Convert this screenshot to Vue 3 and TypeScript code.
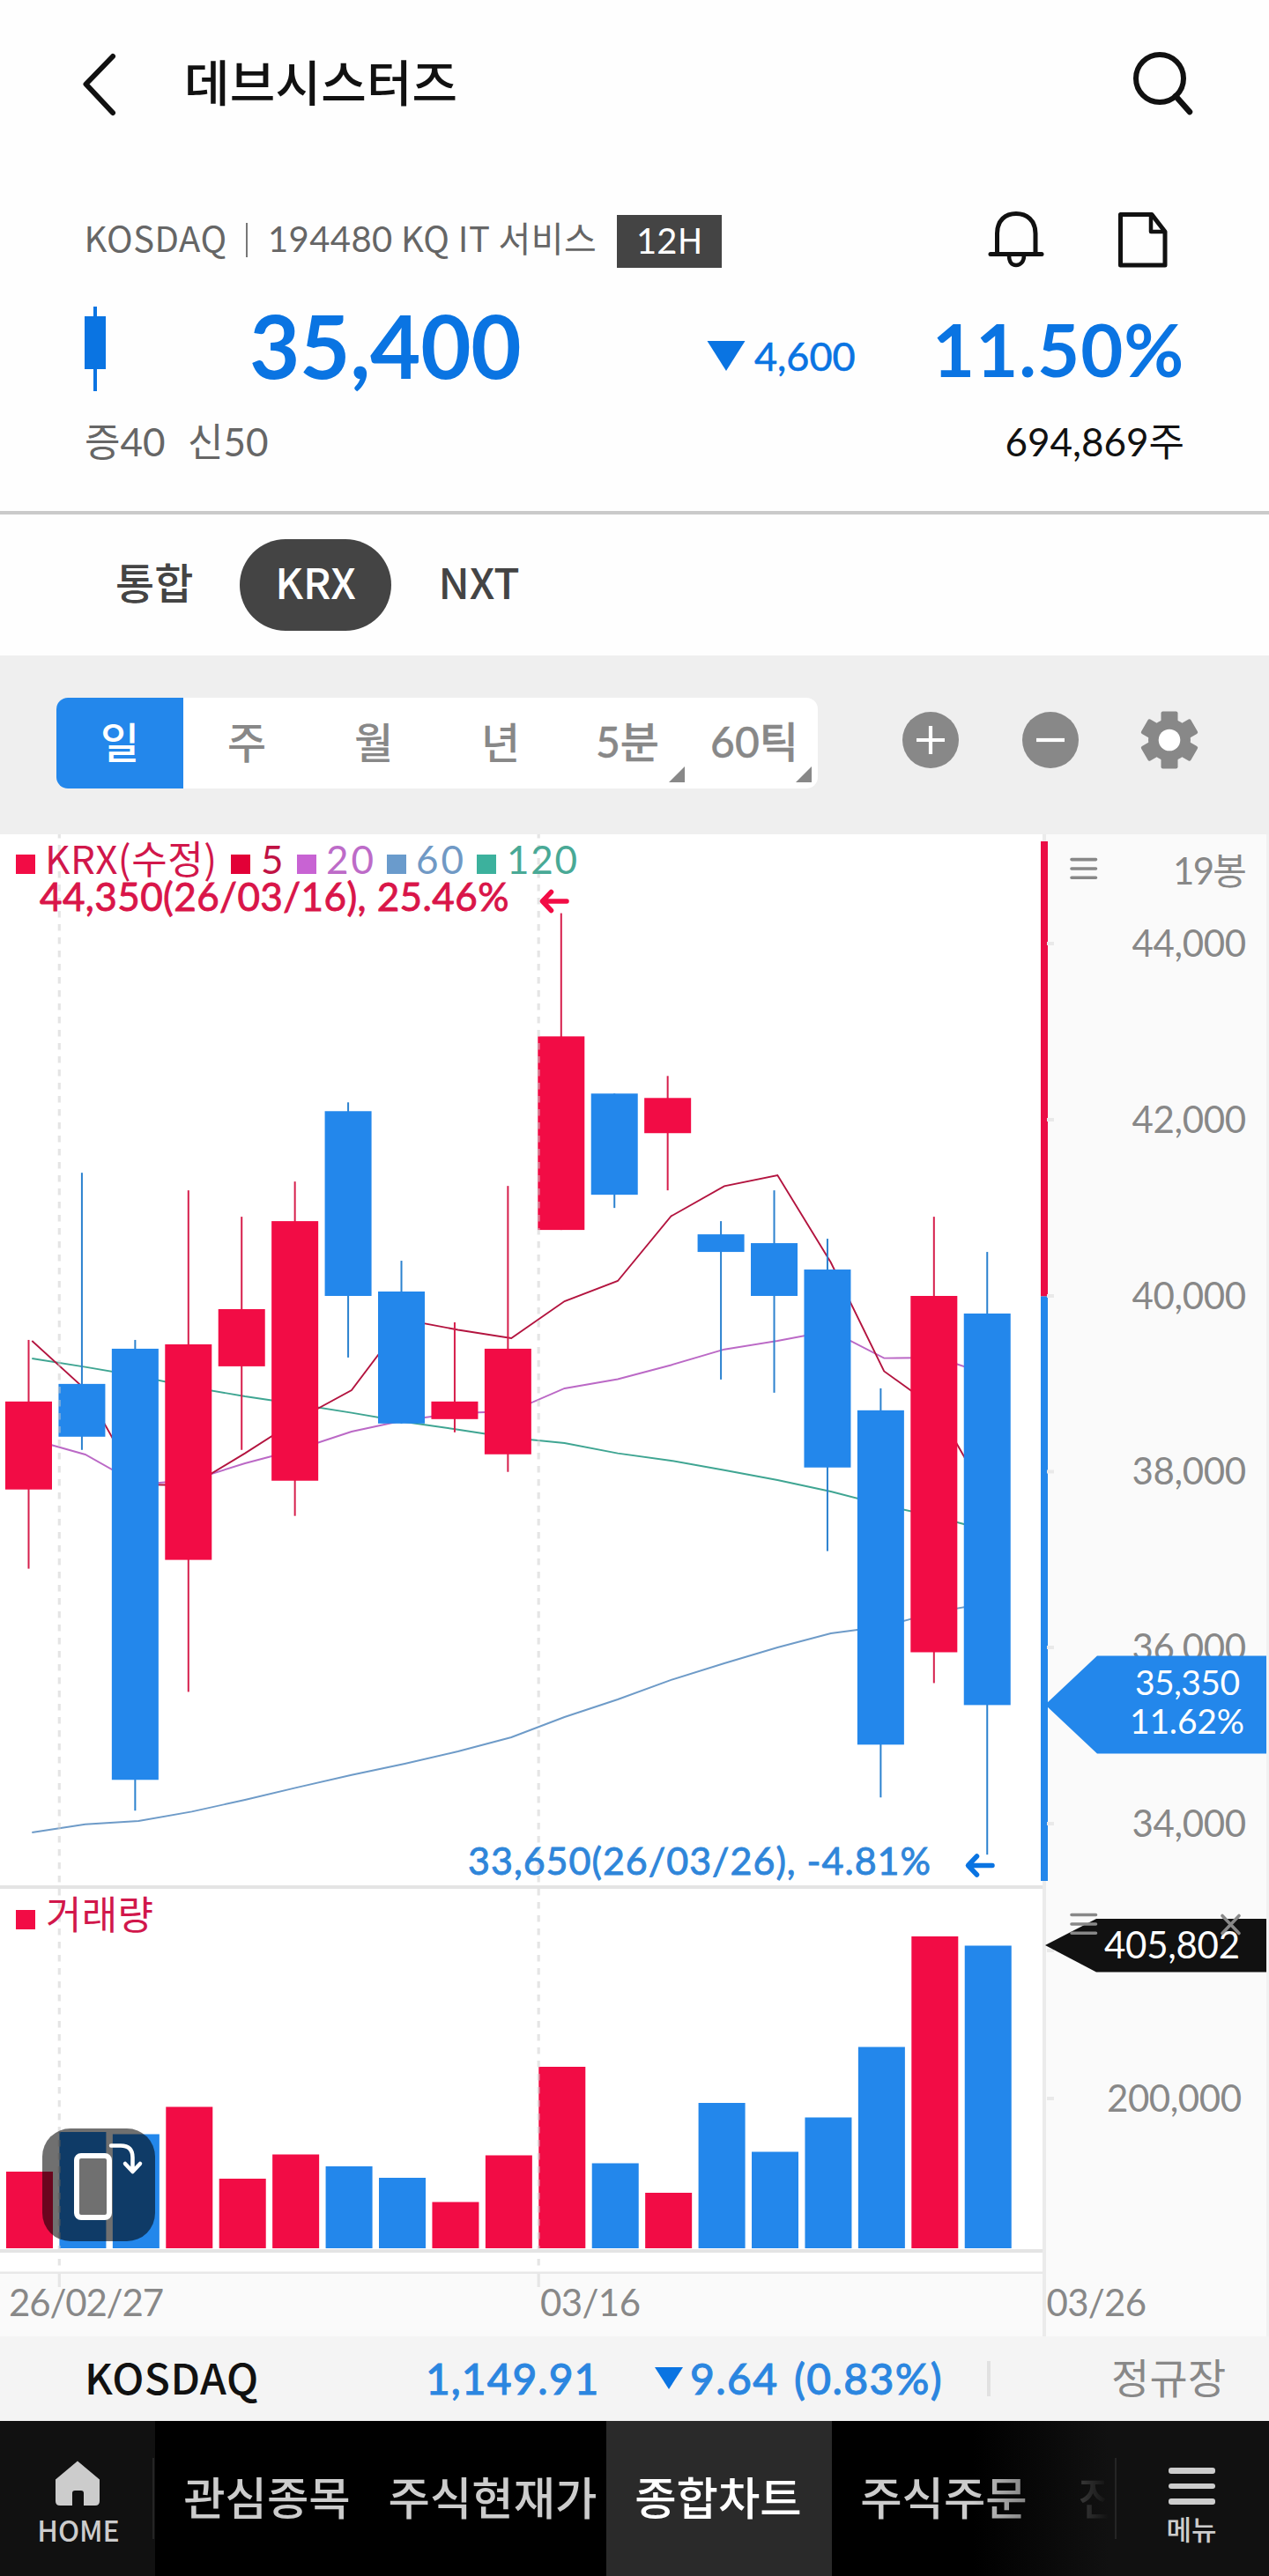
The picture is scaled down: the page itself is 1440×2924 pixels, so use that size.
<script setup lang="ts">
interface Candle {
  open: number
  close: number
  high: number
  low: number
  volumeTop: number
}

interface ChartText {
  x: number
  y: number
  w: number
  size: number
  text: string
  fill: string
  medium?: boolean
  kr?: boolean
}

const RED = '#f20c45'
const BLUE = '#2387eb'
const GRAY = '#888888'

const periods = ['일', '주', '월', '년']

// open, close, high, low in won; top edge of the volume bar in chart units
const rows: number[][] = [
  [37800, 38800, 39500, 36900, 2465],
  [39000, 38400, 41400, 38250, 2420],
  [39400, 34500, 39500, 34150, 2422.5],
  [37000, 39450, 41200, 35500, 2391.5],
  [39200, 39850, 40900, 38250, 2473],
  [37900, 40850, 41300, 37500, 2445.5],
  [42100, 40000, 42200, 39300, 2459],
  [40050, 38550, 40400, 38550, 2472],
  [38600, 38800, 39700, 38450, 2499.5],
  [38200, 39400, 41250, 38000, 2446.5],
  [40750, 42950, 44350, 40750, 2346],
  [42300, 41150, 42300, 41000, 2455.5],
  [41850, 42250, 42500, 41200, 2489],
  [40700, 40500, 40850, 39050, 2387],
  [40600, 40000, 41200, 38900, 2442.5],
  [40300, 38050, 40650, 37100, 2403.5],
  [38700, 34900, 38950, 34300, 2323.5],
  [35950, 40000, 40900, 35600, 2198],
  [39800, 35350, 40500, 33650, 2208.5],
]
const candles: Candle[] = rows.map(([open, close, high, low, volumeTop]) => ({ open, close, high, low, volumeTop }))

const STEP = 60.43
const cx = (i: number): number => 32.5 + i * STEP
const py = (price: number): number => 1471 + (40000 - price) * 0.09987
const color = (c: Candle): string => (c.close >= c.open ? RED : BLUE)
const wickColor = (c: Candle): string => (c.close >= c.open ? '#d61f4c' : '#2c82cf')

const averages: { color: string; ys: number[] }[] = [
  { color: '#3fa592', ys: [1542, 1551.6, 1562, 1574.6, 1585, 1594, 1603.6, 1614, 1622.7, 1632, 1638, 1649.6, 1658, 1668.7, 1680, 1693, 1708.6, 1722, 1738] },
  { color: '#6e9bc8', ys: [2080, 2070.7, 2067, 2056.4, 2043, 2028.6, 2014.8, 2002, 1988, 1972, 1949, 1929, 1906.8, 1888, 1870, 1854, 1846, 1829.6, 1819] },
  { color: '#bb69c6', ys: [1634, 1651, 1685, 1680, 1661, 1645, 1625, 1612, 1604, 1602, 1576, 1565.5, 1549.5, 1531.7, 1522, 1510.5, 1541.6, 1541, 1561] },
  { color: '#b3143f', ys: [1522, 1577, 1685, 1686, 1649.6, 1611, 1578, 1498, 1509.5, 1519, 1477, 1454, 1380.5, 1346.4, 1334, 1433, 1556.4, 1600, 1706] },
]
const points = (ys: number[]): string => ys.map((y, i) => `${(36.3 + i * STEP).toFixed(1)},${y}`).join(' ')

const swatches = [
  { x: 18, y: 970, fill: RED },
  { x: 262, y: 970, fill: '#e20037' },
  { x: 337, y: 970, fill: '#c863d3' },
  { x: 439, y: 970, fill: '#6a9bcc' },
  { x: 541, y: 970, fill: '#3cb19d' },
  { x: 18, y: 2168, fill: RED },
]

const ticks = [1071, 1271, 1471, 1670.5, 1870, 2070, 2214, 2382]

const axisTexts: ChartText[] = [
  { x: 1331, y: 1004, w: 84, size: 42, text: '19봉', fill: GRAY },
  ...['44,000', '42,000', '40,000', '38,000', '36,000', '34,000'].map((text, i) => ({
    x: 1284.5, y: Math.round(1086 + i * 199.8), w: 129.5, size: 42, text, fill: GRAY,
  })),
  { x: 1256, y: 2397, w: 153, size: 42, text: '200,000', fill: GRAY },
  { x: 10, y: 2629, w: 176, size: 42, text: '26/02/27', fill: GRAY },
  { x: 613, y: 2629, w: 114, size: 42, text: '03/16', fill: GRAY },
  { x: 1187.5, y: 2629, w: 113.5, size: 42, text: '03/26', fill: GRAY },
]

const legendTexts: ChartText[] = [
  { x: 51, y: 992, w: 195, size: 44, text: 'KRX(수정)', fill: '#d1174b', kr: true },
  { x: 296, y: 992, w: 26, size: 44, text: '5', fill: '#c01244' },
  { x: 370, y: 992, w: 54, size: 44, text: '20', fill: '#bd6bc8' },
  { x: 472, y: 992, w: 54, size: 44, text: '60', fill: '#7099c5' },
  { x: 575, y: 992, w: 80, size: 44, text: '120', fill: '#49a996' },
  { x: 52, y: 2190, w: 122, size: 44, text: '거래량', fill: '#d1174b', kr: true },
  { x: 45, y: 1034, w: 532.5, size: 44, text: '44,350(26/03/16), 25.46%', fill: '#d91549', medium: true },
  { x: 531, y: 2128, w: 525, size: 43, text: '33,650(26/03/26), -4.81%', fill: '#2f86da', medium: true },
]

const tagTexts: ChartText[] = [
  { x: 1288, y: 1924, w: 119, size: 39, text: '35,350', fill: '#ffffff' },
  { x: 1282, y: 1968, w: 130, size: 39, text: '11.62%', fill: '#ffffff' },
  { x: 1253, y: 2223, w: 154, size: 42, text: '405,802', fill: '#ffffff' },
]

const tabs = [
  { label: '관심종목', active: false },
  { label: '주식현재가', active: false },
  { label: '종합차트', active: true },
  { label: '주식주문', active: false },
]
</script>

<template>
  <div class="app">
    <header class="topbar">
      <svg class="back" width="48" height="80" viewBox="0 0 48 80">
        <path d="M40 9 L9.500 40.500 L40 73" fill="none" stroke="#111" stroke-width="6" stroke-linecap="round" stroke-linejoin="round" />
      </svg>
      <h1 class="title">데브시스터즈</h1>
      <svg class="search" width="80" height="80" viewBox="0 0 80 80">
        <circle cx="38" cy="34" r="27" fill="none" stroke="#111" stroke-width="6" />
        <path d="M56 54 L72 72" stroke="#111" stroke-width="6.500" stroke-linecap="round" />
      </svg>
    </header>

    <section class="quote">
      <div class="meta">
        <span class="market">KOSDAQ</span>
        <span class="bar"></span>
        <span class="code"><span class="num">194480</span> KQ IT 서비스</span>
        <span class="badge"><span class="num">12</span>H</span>
        <svg class="bell" width="64" height="68" viewBox="0 0 64 68">
          <path d="M10.500 49 V27 C10.500 12 20 4.500 32 4.500 C44 4.500 54 12 54 27 V49" fill="none" stroke="#111" stroke-width="5" />
          <path d="M3 50.500 H61" stroke="#111" stroke-width="5" stroke-linecap="round" />
          <path d="M24 52 C24 59 27 63 32 63 C37 63 41 59 41 52" fill="none" stroke="#111" stroke-width="4.500" />
        </svg>
        <svg class="doc" width="60" height="68" viewBox="0 0 60 68">
          <path d="M4.500 4.500 H40 L55 24 V62 H4.500 Z" fill="none" stroke="#111" stroke-width="5" stroke-linejoin="round" />
          <path d="M39 5 V24 H54" fill="none" stroke="#111" stroke-width="4.500" stroke-linejoin="round" />
        </svg>
      </div>
      <div class="prices">
        <svg class="mini" width="24" height="96" viewBox="0 0 24 96">
          <path d="M12 0 V96" stroke="#0a74e2" stroke-width="4" />
          <rect x="0" y="11" width="24" height="60" fill="#0a74e2" />
        </svg>
        <strong class="price">35,400</strong>
        <svg class="down" width="44" height="34" viewBox="0 0 44 34"><path d="M0.500 0 H43.500 L22 34 Z" fill="#0a74e2" /></svg>
        <span class="diff">4,600</span>
        <strong class="rate">11.50%</strong>
      </div>
      <div class="sub">
        <span class="margin">증40</span>
        <span class="credit">신50</span>
        <span class="shares">694,869주</span>
      </div>
    </section>

    <nav class="venues">
      <span class="venue v1">통합</span>
      <span class="venue pill">KRX</span>
      <span class="venue v3">NXT</span>
    </nav>

    <section class="tools">
      <div class="segments">
        <span v-for="(p, i) in periods" :key="p" class="segment" :class="{ on: i === 0 }">{{ p }}</span>
        <span class="segment more">5분</span>
        <span class="segment more">60틱</span>
      </div>
      <svg class="tool plus" width="64" height="66" viewBox="-32 -33 64 66">
        <circle r="32" fill="#888" />
        <path d="M-16 0 H16 M0 -16 V16" stroke="#fff" stroke-width="4.200" />
      </svg>
      <svg class="tool minus" width="64" height="66" viewBox="-32 -33 64 66">
        <circle r="32" fill="#888" />
        <path d="M-16 0 H16" stroke="#fff" stroke-width="4.200" />
      </svg>
      <svg class="tool gear" width="68" height="66" viewBox="-34 -33 68 66">
        <circle r="24" fill="#888" />
        <rect v-for="a in [0, 60, 120, 180, 240, 300]" :key="a" x="-9.500" y="-32.500" width="19" height="20" rx="2" fill="#888" :transform="`rotate(${a})`" />
        <circle r="12.300" fill="#fff" />
      </svg>
    </section>

    <section class="chart">
      <svg width="1440" height="1705" viewBox="0 947 1440 1705">
        <rect x="0" y="947" width="1440" height="1705" fill="#fff" />
        <rect x="1187" y="947" width="250" height="1705" fill="#fafafa" />
        <rect x="1437" y="947" width="3" height="1705" fill="#f1f1f1" />
        <rect x="0" y="2580" width="1187" height="72" fill="#fafafa" />

        <polyline v-for="m in averages" :key="m.color" :points="points(m.ys)" fill="none" :stroke="m.color" stroke-width="1.900" />

        <g v-for="(c, i) in candles" :key="i" :fill="color(c)">
          <rect :x="cx(i) - 1" :y="py(c.high)" width="2" :height="py(c.low) - py(c.high)" :fill="wickColor(c)" />
          <rect :x="cx(i) - 26.500" :y="py(Math.max(c.open, c.close))" width="53" :height="Math.abs(py(c.open) - py(c.close))" />
          <rect :x="cx(i) - 25.500" :y="c.volumeTop" width="53" :height="2552 - c.volumeTop" />
        </g>

        <g stroke="#cccccc" stroke-opacity="0.5" stroke-width="3.200" stroke-dasharray="7.500 7.500">
          <path d="M67.300 944 V2579" />
          <path d="M611.200 944 V2579" />
        </g>
        <path d="M67.300 2581 V2596 M611.200 2581 V2596" stroke="#e6e6e6" stroke-width="3.200" />
        <path d="M0 2142 H1183 M0 2555 H1183" stroke="#e4e4e4" stroke-width="4" />
        <path d="M0 2579.800 H1183" stroke="#e8e8e8" stroke-width="2.500" />
        <rect x="1183" y="947" width="4" height="1705" fill="#ebebeb" />
        <rect x="1181" y="955" width="8" height="516.500" fill="#eb0d45" />
        <rect x="1181" y="1471.500" width="8" height="663.500" :fill="BLUE" />
        <rect v-for="t in ticks" :key="t" x="1188" :y="t - 2" width="8" height="4" fill="#e9e9e9" />

        <rect v-for="(s, i) in swatches" :key="i" :x="s.x" :y="s.y" width="22" height="22" :fill="s.fill" />

        <text
          v-for="t in [...legendTexts, ...axisTexts]"
          :key="t.text"
          :class="t.kr ? 'kr' : 'nm'"
          :x="t.x" :y="t.y" :font-size="t.size" :fill="t.fill" :textLength="t.w"
          :stroke="t.medium ? t.fill : 'none'" stroke-width="0.900"
        >{{ t.text }}</text>

        <g fill="none" stroke-width="5.500" stroke-linecap="round" stroke-linejoin="round">
          <path d="M643 1023 H616 M625.500 1012.500 L615.500 1023 L625.500 1033.500" :stroke="RED" />
          <path d="M1126 2117.500 H1099 M1108.500 2107 L1098.500 2117.500 L1108.500 2128" stroke="#0a74e2" />
        </g>

        <path d="M1186 1935 L1245 1879.500 H1437 V1990.500 H1245 Z" :fill="BLUE" />
        <path d="M1186 2208 L1244 2178 H1437 V2238.500 H1244 Z" fill="#111" />
        <text
          v-for="t in tagTexts" :key="t.text" class="nm"
          :x="t.x" :y="t.y" :font-size="t.size" :fill="t.fill" :textLength="t.w"
        >{{ t.text }}</text>

        <g stroke="#888" stroke-width="3.600" stroke-linecap="round" fill="none">
          <path d="M1216 975.600 H1243.500 M1216 986 H1243.500 M1216 996.300 H1243.500" />
          <path d="M1216 2173.500 H1243.500 M1216 2184 H1243.500 M1216 2194.300 H1243.500" />
          <path d="M1387 2174.500 L1406 2194.500 M1406 2174.500 L1387 2194.500" />
        </g>
      </svg>
      <svg class="rotate" width="128" height="128" viewBox="0 0 128 128">
        <rect width="128" height="128" rx="32" fill="#000" fill-opacity="0.56" />
        <rect x="39" y="31" width="37" height="70" rx="5" fill="#707070" stroke="#fff" stroke-width="6" />
        <path d="M78 19.500 H89 C98 19.500 102.500 24 102.500 33 V48 M94 40 L102.500 49 L111 40" fill="none" stroke="#fff" stroke-width="4.500" stroke-linecap="round" stroke-linejoin="round" />
      </svg>
    </section>

    <section class="index">
      <span class="name">KOSDAQ</span>
      <span class="value">1,149.91</span>
      <svg class="tri" width="32" height="25" viewBox="0 0 32 25"><path d="M0 0 H32 L16 25 Z" fill="#0a74e2" /></svg>
      <span class="change">9.64 (0.83%)</span>
      <span class="split"></span>
      <span class="session">정규장</span>
    </section>

    <footer class="nav">
      <div class="home">
        <svg width="52" height="52" viewBox="0 0 52 52">
          <path d="M26 0.500 L51 21.500 V46 Q51 51 46 51 H33 V37 Q33 34 30 34 H23 Q20 34 20 37 V51 H6 Q1 51 1 46 V21.500 Z" fill="#ccc" />
        </svg>
        <span>HOME</span>
      </div>
      <div class="tabs">
        <span v-for="t in tabs" :key="t.label" class="tab" :class="{ active: t.active }">{{ t.label }}</span>
        <span class="tab cut">진</span>
      </div>
      <div class="menu">
        <i></i><i></i><i></i>
        <span>메뉴</span>
      </div>
    </footer>
  </div>
</template>

<style>
body {
  margin: 0;
  background: #fff;
}
</style>

<style scoped>
.app {
  display: flex;
  flex-direction: column;
  width: 1440px;
  height: 2924px;
  overflow: hidden;
  background: #fefefe;
  color: #111;
  font-family: 'Noto Sans CJK KR', 'Noto Sans', sans-serif;
  white-space: nowrap;
}
.app svg {
  display: block;
  flex: none;
}
.num,
.nm {
  font-family: Lato, 'Noto Sans CJK KR', sans-serif;
}
.kr {
  font-family: 'Noto Sans CJK KR', sans-serif;
}

.topbar {
  display: flex;
  align-items: flex-start;
  height: 244px;
}
.back {
  margin: 55px 0 0 88px;
}
.title {
  margin: 51px 0 0 73px;
  font-size: 56px;
  line-height: 80px;
  font-weight: 500;
  letter-spacing: 0.2px;
}
.search {
  margin: 55px 82px 0 auto;
}

.quote {
  height: 336px;
  border-bottom: 4px solid #cacaca;
}
.meta {
  display: flex;
  align-items: flex-start;
  height: 104px;
  font-size: 40px;
  line-height: 51px;
  color: #666;
}
.market {
  width: 183px;
  margin-left: 95.5px;
  letter-spacing: 0.5px;
}
.bar {
  width: 2.5px;
  height: 39px;
  margin-top: 9px;
  background: #777;
}
.code {
  width: 396px;
  margin-left: 23px;
  letter-spacing: 0.4px;
}
.badge {
  width: 97px;
  height: 60px;
  padding-left: 22px;
  line-height: 54px;
  background: #444;
  color: #fff;
}
.bell {
  margin: -6px 0 0 302px;
}
.doc {
  margin: -5px 0 0 82px;
}
.prices {
  display: flex;
  align-items: flex-start;
  height: 110px;
  color: #0a74e2;
  font-family: Lato, sans-serif;
}
.mini {
  margin-left: 96px;
}
.price {
  width: 519px;
  margin-left: 163px;
  font-size: 99px;
  line-height: 88px;
  font-weight: 700;
  letter-spacing: -0.3px;
}
.down {
  margin-top: 39px;
}
.diff {
  width: 202px;
  margin-left: 10px;
  font-size: 45px;
  line-height: 112px;
  -webkit-text-stroke: 0.6px currentColor;
}
.rate {
  font-size: 83px;
  line-height: 97px;
  font-weight: 700;
  letter-spacing: 1px;
}
.sub {
  display: flex;
  height: 122px;
  color: #666;
  font-size: 44px;
  line-height: 86px;
  font-family: Lato, 'Noto Sans CJK KR', sans-serif;
}
.margin {
  width: 117px;
  margin-left: 96px;
}
.shares {
  margin-left: auto;
  margin-right: 96px;
  color: #111;
}

.venues {
  display: flex;
  align-items: flex-start;
  height: 160px;
  padding-top: 28px;
  box-sizing: border-box;
  flex: none;
}
.venue {
  height: 104px;
  font-size: 48px;
  line-height: 95px;
  font-weight: 500;
  color: #444;
}
.v1 {
  width: 141px;
  margin-left: 131px;
}
.pill {
  width: 172px;
  border-radius: 52px;
  background: #444;
  color: #fff;
  text-align: center;
}
.v3 {
  margin-left: 53.5px;
}

.tools {
  display: flex;
  align-items: flex-start;
  height: 203px;
  box-sizing: border-box;
  padding: 48px 0 0 64px;
  background: #efefef;
  flex: none;
}
.segments {
  display: flex;
  width: 864px;
  height: 103px;
  border-radius: 13px;
  overflow: hidden;
  background: #fff;
}
.segment {
  position: relative;
  width: 144px;
  font-size: 48px;
  line-height: 96px;
  font-weight: 500;
  text-align: center;
  color: #888;
}
.segment.on {
  background: #2387eb;
  color: #fff;
}
.segment.more {
  font-family: Lato, 'Noto Sans CJK KR', sans-serif;
  line-height: 99px;
  -webkit-text-stroke: 0.4px currentColor;
}
.segment.more::after {
  content: '';
  position: absolute;
  right: 7px;
  bottom: 7px;
  border-left: 18px solid transparent;
  border-bottom: 18px solid #888;
}
.tool {
  margin-top: 15px;
}
.plus {
  margin-left: 96px;
}
.minus {
  margin-left: 72px;
}
.gear {
  margin-left: 69px;
}

.chart {
  position: relative;
  height: 1705px;
  flex: none;
}
.chart .rotate {
  position: absolute;
  left: 48px;
  top: 1469px;
}

.index {
  display: flex;
  align-items: flex-start;
  height: 96px;
  background: #f4f4f4;
  font-size: 48px;
  line-height: 92px;
  font-weight: 500;
  flex: none;
}
.name {
  width: 387px;
  margin-left: 96px;
  line-height: 90px;
  letter-spacing: 0.5px;
}
.value {
  width: 260px;
  color: #2b86e0;
  font-family: Lato, sans-serif;
  line-height: 95px;
  letter-spacing: 1px;
  -webkit-text-stroke: 0.9px currentColor;
}
.tri {
  margin-top: 35px;
}
.change {
  width: 337px;
  margin-left: 8px;
  color: #2b86e0;
  font-family: Lato, sans-serif;
  line-height: 95px;
  letter-spacing: 1.4px;
  word-spacing: 4px;
  -webkit-text-stroke: 0.9px currentColor;
}
.split {
  width: 4px;
  height: 40px;
  margin-top: 28px;
  background: #e1e1e1;
}
.session {
  margin-left: 137px;
  font-size: 47px;
  letter-spacing: 0.3px;
  font-weight: 400;
  color: #888;
  line-height: 89px;
}

.nav {
  display: flex;
  height: 176px;
  background: #111;
  color: #ccc;
  flex: none;
}
.home {
  display: flex;
  flex-direction: column;
  align-items: center;
  width: 176px;
  box-sizing: border-box;
  padding-top: 45px;
  background: linear-gradient(#252525, #252525) 173px 42px / 2px 92px no-repeat #111;
}
.home span {
  margin-top: 2px;
  padding-left: 2px;
  font-size: 32px;
  line-height: 48px;
  font-weight: 500;
}
.tabs {
  position: relative;
  display: flex;
  width: 1088px;
  overflow: hidden;
  background: #000;
}
.tabs::after {
  content: '';
  position: absolute;
  top: 0;
  right: 0;
  width: 160px;
  height: 176px;
  background: linear-gradient(to right, rgba(17, 17, 17, 0), #111 96%);
}
.tab {
  flex: none;
  width: 256px;
  box-sizing: border-box;
  padding-right: 2px;
  font-size: 51.5px;
  line-height: 169px;
  font-weight: 500;
  text-align: center;
}
.tab.active {
  background: #2a2a2a;
  color: #fff;
}
.tab.cut {
  text-align: left;
  text-indent: 23px;
}
.menu {
  display: flex;
  flex-direction: column;
  align-items: center;
  gap: 11px;
  width: 176px;
  box-sizing: border-box;
  padding-top: 53px;
  background: linear-gradient(#252525, #252525) 1px 42px / 2px 92px no-repeat #111;
}
.menu i {
  width: 53px;
  height: 6.5px;
  border-radius: 3px;
  background: #ccc;
}
.menu span {
  margin-top: -7px;
  font-size: 31px;
  line-height: 46px;
  font-weight: 500;
}
</style>
